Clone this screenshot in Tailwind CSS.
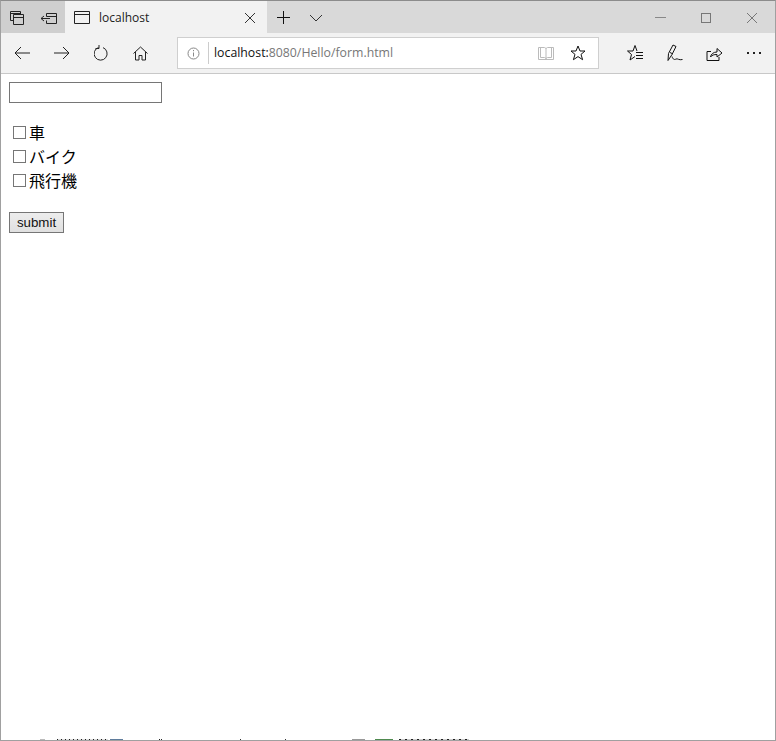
<!DOCTYPE html>
<html lang="ja">
<head>
    <meta charset="UTF-8">
    <title>localhost</title>
    <script src="https://cdn.jsdelivr.net/npm/@tailwindcss/browser@4"></script>
</head>
<body class="bg-white">
    <div class="relative w-[776px] h-[741px] flex flex-col overflow-hidden border border-[#a0a0a0] border-t-[#8c8c8c] font-['Liberation_Sans',sans-serif]">
        <!-- tab strip -->
        <div class="h-[32px] shrink-0 flex bg-[#d9d9d9] text-black">
            <div class="w-[64px] flex items-center pt-px bg-[#cfcfcf]">
                <svg class="ml-[8px]" width="16" height="16" viewBox="0 0 16 16" fill="none" stroke="#222" stroke-width="1">
                    <path d="M1.500 1.500h10v3M1.500 1.500v9h3M1.500 3.500h10M4.500 4.500h10v10h-10zM4.500 7.500h10"/>
                </svg>
                <svg class="ml-[15px]" width="18" height="16" viewBox="0 0 18 16" fill="none" stroke="#222" stroke-width="1">
                    <path d="M6.500 3.500h10v10h-10v-3M6.500 3.500v3M1 8.500h9M4 6l-3 2.500 3 2.500M6.500 6.500h10"/>
                </svg>
            </div>
            <div class="w-[202px] flex items-center pt-px bg-[#f2f2f2]">
                <svg class="ml-[9px]" width="17" height="15" viewBox="0 0 17 15" fill="none" stroke="#222" stroke-width="1">
                    <path d="M.5 1.500h15v12H.5zM.5 4.500h15"/>
                </svg>
                <span class="ml-[8px] text-[12px] text-[#222] font-['Open_Sans',sans-serif]">localhost</span>
                <svg class="ml-auto mr-[11px]" width="12" height="12" viewBox="0 0 12 12" stroke="#333" stroke-width="1">
                    <path d="M1 1l10 10M11 1L1 11"/>
                </svg>
            </div>
            <div class="flex items-center pt-px">
                <svg class="ml-[9px]" width="15" height="15" viewBox="0 0 15 15" stroke="#111" stroke-width="1">
                    <path d="M7.500 1v13M1 7.500h13"/>
                </svg>
                <svg class="ml-[18px]" width="14" height="8" viewBox="0 0 14 8" fill="none" stroke="#333" stroke-width="1">
                    <path d="M1 1l6 6 6-6"/>
                </svg>
            </div>
            <div class="ml-auto flex items-center pt-px pr-[17px] gap-[35px]">
                <div class="w-[11px] h-px bg-[#888]"></div>
                <div class="w-[10px] h-[10px] border border-[#777]"></div>
                <svg width="12" height="12" viewBox="0 0 12 12" stroke="#777" stroke-width="1">
                    <path d="M1 1l10 10M11 1L1 11"/>
                </svg>
            </div>
        </div>

        <!-- address bar -->
        <div class="h-[41px] shrink-0 flex items-center bg-[#f2f2f2] border-b border-[#c8c8c8]">
            <svg class="ml-[12px]" width="18" height="16" viewBox="0 0 18 16" fill="none" stroke="#222" stroke-width="1">
                <path d="M17 8H2M8 2L2 8l6 6"/>
            </svg>
            <svg class="ml-[22px]" width="18" height="16" viewBox="0 0 18 16" fill="none" stroke="#222" stroke-width="1">
                <path d="M1 8h15M10 2l6 6-6 6"/>
            </svg>
            <svg class="ml-[23px]" width="16" height="16" viewBox="0 0 16 16" fill="none" stroke="#222" stroke-width="1">
                <path d="M4.500 2.500A6.500 6.500 0 1 0 9 2.600M5 0v3.500H1.500"/>
            </svg>
            <svg class="ml-[23px]" width="15" height="15" viewBox="0 0 15 15" fill="none" stroke="#222" stroke-width="1">
                <path d="M.5 7.500L7.500 1l7 6.500M2.500 6v8h3.500v-4.500h3V14h3.500V6"/>
            </svg>
            <div class="ml-[29px] w-[422px] h-[32px] flex items-center bg-white border border-[#cfcfcf]">
                <svg class="ml-[9px]" width="13" height="13" viewBox="0 0 13 13" fill="none" stroke="#888" stroke-width="1">
                    <circle cx="6.500" cy="6.500" r="5.500"/>
                    <path d="M6.500 5.500v4M6.500 3v1.200"/>
                </svg>
                <div class="ml-[8px] w-px h-[22px] bg-[#cccccc]"></div>
                <div class="ml-[5px] text-[12.3px] text-[#777] font-['Open_Sans',sans-serif]"><span class="text-[#111]">localhost:</span>8080/Hello/form.html</div>
                <svg class="ml-auto" width="16" height="15" viewBox="0 0 16 15" fill="none" stroke="#bbb" stroke-width="1">
                    <path d="M.5 1.500h6l1.500 1 1.500-1h6v12H.5zM8 2.500v11M2.500 1.500v10h4l1.500 1 1.500-1h4v-10"/>
                </svg>
                <svg class="ml-[16px] mr-[12px]" width="16" height="16" viewBox="0 0 16 16" fill="none" stroke="#111" stroke-width="1">
                    <path d="M8 1l2 5h5l-4 3.400 1.600 5.300L8 11.600l-4.600 3.100L5 9.400 1 6h5z"/>
                </svg>
            </div>
            <svg class="ml-[28px]" width="17" height="16" viewBox="0 0 17 16" fill="none" stroke="#111" stroke-width="1">
                <path d="M10 6L8 .5 6 6H.5L4.500 9.500 3 15l5-3.500M9 7.500h7M9 10.500h7M9 13.500h7"/>
            </svg>
            <svg class="ml-[23px]" width="16" height="18" viewBox="0 0 16 18" fill="none" stroke="#111" stroke-width="1">
                <path d="M1 16.500l.5-7L6 1l3 1.500-4 8zM3 8.500l3 1.500M5 12.500c1 3 2.500 3.500 4 2.500 1.500-.8 3 1.500 6.500.5"/>
            </svg>
            <svg class="ml-[23px]" width="17" height="15" viewBox="0 0 17 15" fill="none" stroke="#111" stroke-width="1">
                <path d="M1 5.500v9h12V11M1 5.500h4M4.500 11c.5-3 3-5 6.500-5V2.500l5 4.500-5 4V8.500c-3 0-5 .5-6.500 2.500z"/>
            </svg>
            <div class="ml-[24px] flex gap-[4px]">
                <div class="w-[2px] h-[2px] bg-[#222]"></div>
                <div class="w-[2px] h-[2px] bg-[#222]"></div>
                <div class="w-[2px] h-[2px] bg-[#222]"></div>
            </div>
        </div>

        <!-- page -->
        <form class="flex-1 min-h-0 pt-[8px] pl-[8px] text-[16px] leading-[24px] text-black font-['Liberation_Sans','Noto_Sans_CJK_JP',sans-serif]">
            <input type="text" class="block w-[153px] h-[21px] border border-[#767676] bg-white">
            <div class="mt-[18px] flex flex-col">
                <label class="flex items-center h-[24px]"><input type="checkbox" class="appearance-none ml-[4px] mr-[3px] mb-[2px] w-[13px] h-[13px] border border-[#767676] bg-white"><span class="pt-[2px]">車</span></label>
                <label class="flex items-center h-[24px]"><input type="checkbox" class="appearance-none ml-[4px] mr-[3px] mb-[2px] w-[13px] h-[13px] border border-[#767676] bg-white"><span class="pt-[2px]">バイク</span></label>
                <label class="flex items-center h-[24px]"><input type="checkbox" class="appearance-none ml-[4px] mr-[3px] mb-[2px] w-[13px] h-[13px] border border-[#767676] bg-white"><span class="pt-[2px]">飛行機</span></label>
            </div>
            <button type="button" class="block mt-[19px] w-[55px] h-[21px] border border-[#767676] bg-gradient-to-b from-[#ededed] to-[#e0e0e0] text-[13.3px] leading-[19px] text-[#111]">submit</button>
        </form>

        <!-- what shows of the window behind, along the bottom edge -->
        <div class="h-px shrink-0 flex">
            <div class="ml-[39px] w-[5px] bg-[#bbbbbb]"></div>
            <div class="ml-[12px] w-[51px] bg-[repeating-linear-gradient(90deg,#222_0_1px,#ddd_1px_4px)]"></div>
            <div class="ml-[2px] w-[13px] bg-[#5f7c9c]"></div>
            <div class="ml-[36px] w-[3px] bg-[repeating-linear-gradient(90deg,#222_0_1px,#fff_1px_2px)]"></div>
            <div class="ml-[78px] w-px bg-[#333]"></div>
            <div class="ml-[44px] w-px bg-[#333]"></div>
            <div class="ml-[66px] w-[13px] bg-[#999]"></div>
            <div class="ml-[10px] w-[18px] bg-[#4f8a4f]"></div>
            <div class="ml-[6px] w-[70px] bg-[repeating-linear-gradient(90deg,#222_0_2px,#ccc_2px_6px)]"></div>
        </div>

        <!-- brown sliver on the left window edge -->
        <div class="absolute left-[-1px] top-[91px] w-px h-[20px] bg-[#a5784f]"></div>
    </div>
</body>
</html>
